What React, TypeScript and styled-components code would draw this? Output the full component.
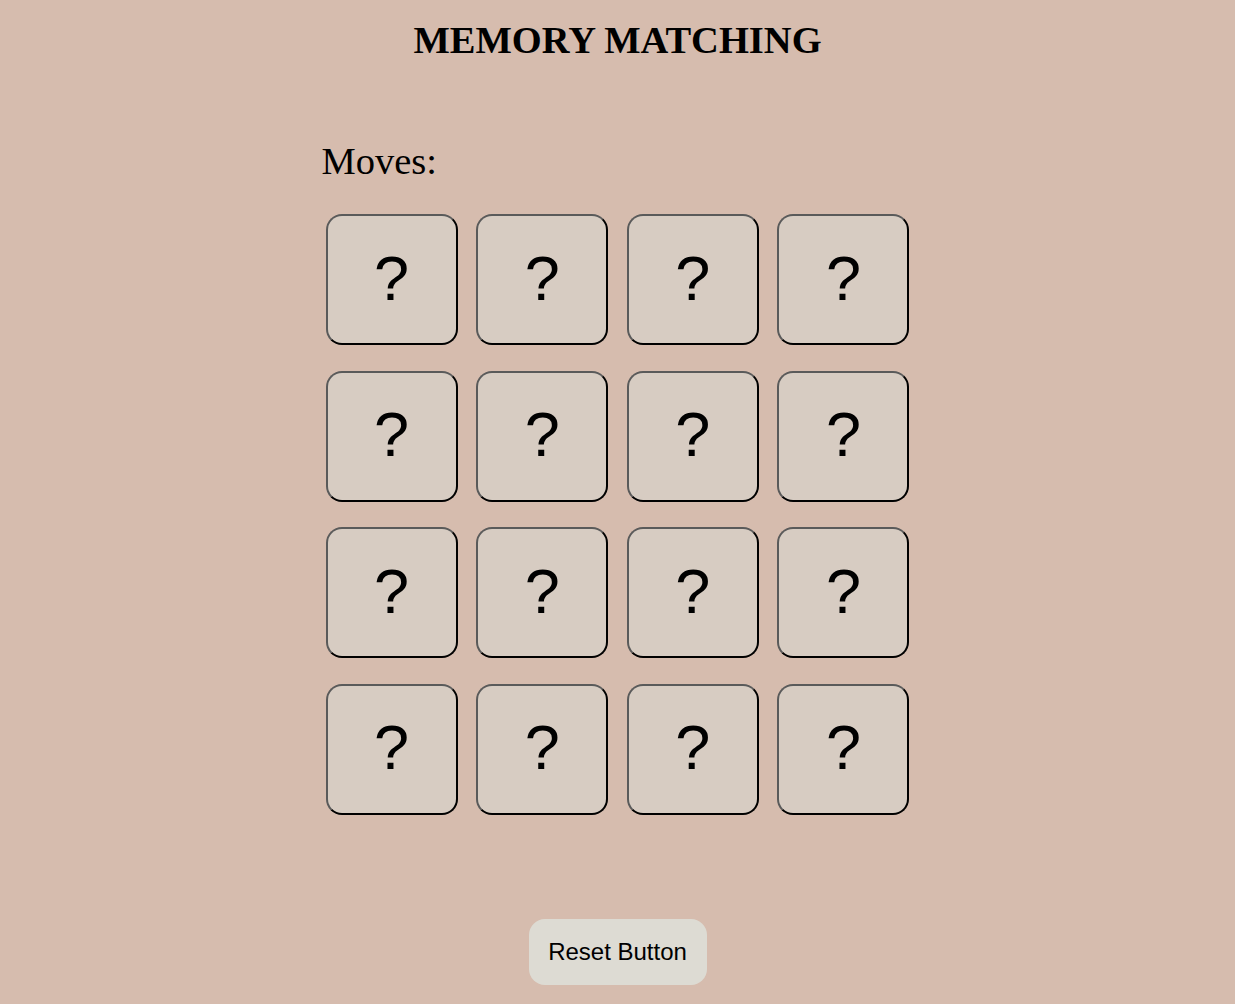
import React from "react";
import styled, { createGlobalStyle } from "styled-components";

const Global = createGlobalStyle`
  html, body { margin: 0; padding: 0; background: #d6bcae; }
  body { font-family: "Liberation Serif", "Times New Roman", serif; }
`;

const Page = styled.div`
  min-height: 1004px;
  display: flex;
  flex-direction: column;
  align-items: center;
  background: #d6bcae;
`;

const Title = styled.h1`
  margin: 17px 0 0;
  font-family: "Liberation Serif", serif;
  font-size: 38.5px;
  font-weight: bold;
  line-height: 46px;
  color: #000;
`;

const Board = styled.div`
  width: 602px;
  margin-top: 78px;
  display: flex;
  flex-direction: column;
`;

const Moves = styled.div`
  font-family: "Liberation Serif", serif;
  font-size: 38.5px;
  line-height: 40px;
  margin-left: 5px;
  color: #000;
`;

const Grid = styled.div`
  margin-top: 33px;
  display: grid;
  grid-template-columns: repeat(4, 132px);
  column-gap: 18.67px;
  row-gap: 25.5px;
  justify-content: center;
`;

const Card = styled.button`
  width: 132px;
  height: 131px;
  box-sizing: border-box;
  background: #d7ccc2;
  border: 2px outset #555;
  border-color: #5a5a5a #111 #111 #5a5a5a;
  border-radius: 16px;
  font-family: "Liberation Sans", Arial, sans-serif;
  font-size: 63px;
  color: #000;
  display: flex;
  align-items: center;
  justify-content: center;
  padding: 0 0 4px;
  cursor: pointer;
`;

const Reset = styled.button`
  margin-top: 104px;
  width: 178px;
  height: 66px;
  background: #dddbd3;
  border: none;
  border-radius: 16px;
  font-family: "Liberation Sans", Arial, sans-serif;
  font-size: 24px;
  color: #000;
  cursor: pointer;
`;

export default function App() {
  const cards = Array.from({ length: 16 }, (_, i) => i);
  return (
    <Page>
      <Global />
      <Title>MEMORY MATCHING</Title>
      <Board>
        <Moves>Moves:</Moves>
        <Grid>
          {cards.map((i) => (
            <Card key={i}>?</Card>
          ))}
        </Grid>
      </Board>
      <Reset>Reset Button</Reset>
    </Page>
  );
}
